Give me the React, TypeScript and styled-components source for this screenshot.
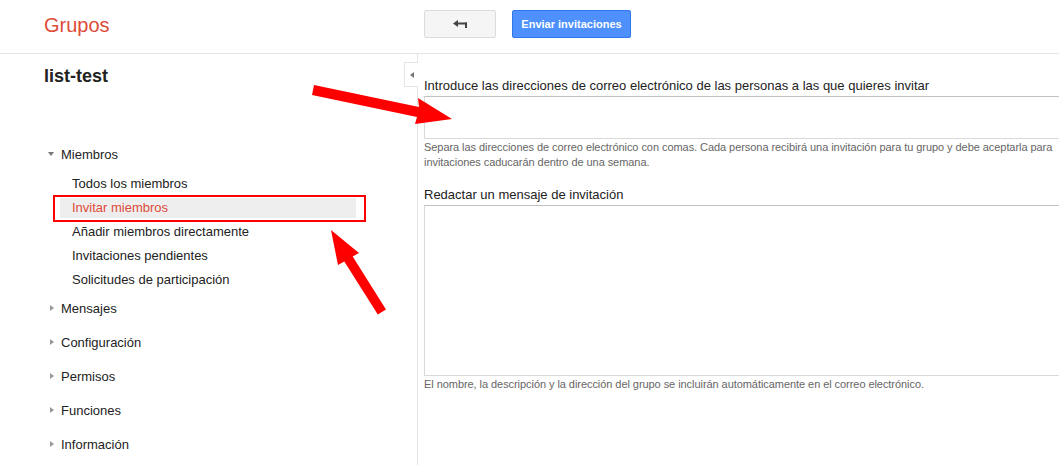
import React from "react"
import styled, { createGlobalStyle } from "styled-components"

const GlobalStyle = createGlobalStyle`
    html, body { margin: 0; padding: 0; background: #fff; }
    body {
        font-family: "Liberation Sans", Arial, sans-serif;
        color: #222;
        overflow: hidden;
    }
`

const Page = styled.div`
    position: relative;
    width: 1059px;
    height: 465px;
    overflow: hidden;
`

const Header = styled.div`
    display: flex;
    height: 53px;
    border-bottom: 1px solid #e5e5e5;
`
const Brand = styled.div`
    width: 417px;
    padding: 13px 0 0 44px;
    box-sizing: border-box;
    font-size: 20px;
    line-height: 24px;
    color: #dd4b39;
`
const Toolbar = styled.div`
    display: flex;
    gap: 16px;
    padding: 10px 0 0 7px;
`
const Button = styled.button<{ $primary?: boolean }>`
    display: flex;
    align-items: center;
    justify-content: center;
    height: 28px;
    width: ${p => (p.$primary ? "119px" : "72px")};
    padding: 0;
    border-radius: 2px;
    border: 1px solid ${p => (p.$primary ? "#3079ed" : "#dcdcdc")};
    background: ${p => (p.$primary ? "#4d90fe" : "#f5f5f5")};
    color: ${p => (p.$primary ? "#fff" : "#444")};
    font-family: "Liberation Sans", Arial, sans-serif;
    font-size: 11px;
    font-weight: bold;
`

const Body = styled.div`
    display: flex;
    height: 411px;
`
const Sidebar = styled.div`
    position: relative;
    width: 418px;
    flex-shrink: 0;
    box-sizing: border-box;
    border-right: 1px solid #e5e5e5;
`
const CollapseTab = styled.div`
    position: absolute;
    top: 8px;
    right: -1px;
    width: 14px;
    height: 25px;
    box-sizing: border-box;
    border: 1px solid #e5e5e5;
    border-right: none;
    background: #fff;
    display: flex;
    align-items: center;
    justify-content: center;
    &::before {
        content: "";
        border-top: 3px solid transparent;
        border-bottom: 3px solid transparent;
        border-right: 4px solid #777;
    }
`
const GroupTitle = styled.div`
    padding: 11px 0 0 44px;
    height: 72px;
    font-size: 18px;
    line-height: 22px;
    font-weight: bold;
    color: #222;
`
const Nav = styled.div`
    padding-left: 48px;
`
const SectionHead = styled.div`
    display: flex;
    align-items: center;
    height: 34px;
    font-size: 13px;
    color: #222;
`
const Caret = styled.span<{ $open?: boolean }>`
    display: flex;
    align-items: center;
    width: 13px;
    padding-left: ${p => (p.$open ? "0" : "2px")};
    box-sizing: border-box;
    &::before {
        content: "";
        ${p =>
            p.$open
                ? `border-left: 3.5px solid transparent;
                   border-right: 3.5px solid transparent;
                   border-top: 4px solid #777;`
                : `border-top: 3.5px solid transparent;
                   border-bottom: 3.5px solid transparent;
                   border-left: 4px solid #999;`}
    }
`
const SubList = styled.div`
    display: flex;
    flex-direction: column;
    gap: 4px;
    padding: 3px 0 1px;
`
const SubItem = styled.div<{ $active?: boolean }>`
    position: relative;
    margin-left: 12px;
    width: 296px;
    height: 20px;
    line-height: 20px;
    padding-left: 12px;
    box-sizing: border-box;
    font-size: 13px;
    color: ${p => (p.$active ? "#dd4b39" : "#222")};
    background: ${p => (p.$active ? "#eee" : "transparent")};
`
const Highlight = styled.div`
    position: absolute;
    left: -7px;
    top: -3px;
    width: 313px;
    height: 27px;
    box-sizing: border-box;
    border: 2px solid #f00;
`

const Main = styled.div`
    padding-left: 6px;
`
const Label = styled.div<{ $top: number }>`
    margin-top: ${p => p.$top}px;
    font-size: 13px;
    line-height: 16px;
    color: #222;
    white-space: nowrap;
`
const Field = styled.div<{ $h: number }>`
    margin-top: 2px;
    width: 700px;
    height: ${p => p.$h}px;
    box-sizing: border-box;
    border: 1px solid #d9d9d9;
    border-top-color: #c0c0c0;
`
const Hint = styled.div`
    margin-top: 1px;
    font-size: 11px;
    line-height: 15px;
    letter-spacing: -0.06px;
    color: #666;
    white-space: nowrap;
`

const Overlay = styled.svg`
    position: absolute;
    left: 0;
    top: 0;
    pointer-events: none;
`

const BackIcon = () => (
    <svg width="15" height="9" viewBox="0 0 15 9">
        <polygon points="0,3.5 5,0 5,7" fill="#444" />
        <rect x="4" y="2.5" width="10" height="2" fill="#444" />
        <rect x="12" y="2.5" width="2" height="5.5" fill="#444" />
    </svg>
)

const subItems = [
    "Todos los miembros",
    "Invitar miembros",
    "Añadir miembros directamente",
    "Invitaciones pendientes",
    "Solicitudes de participación",
]
const sections = ["Mensajes", "Configuración", "Permisos", "Funciones", "Información"]

export default function App() {
    return (
        <>
            <GlobalStyle />
            <Page>
                <Header>
                    <Brand>Grupos</Brand>
                    <Toolbar>
                        <Button><BackIcon /></Button>
                        <Button $primary>Enviar invitaciones</Button>
                    </Toolbar>
                </Header>
                <Body>
                    <Sidebar>
                        <CollapseTab />
                        <GroupTitle>list-test</GroupTitle>
                        <Nav>
                            <SectionHead><Caret $open />Miembros</SectionHead>
                            <SubList>
                                {subItems.map(item => (
                                    <SubItem key={item} $active={item === "Invitar miembros"}>
                                        {item}
                                        {item === "Invitar miembros" && <Highlight />}
                                    </SubItem>
                                ))}
                            </SubList>
                            {sections.map(s => (
                                <SectionHead key={s}><Caret />{s}</SectionHead>
                            ))}
                        </Nav>
                    </Sidebar>
                    <Main>
                        <Label $top={24}>
                            Introduce las direcciones de correo electrónico de las personas a las que quieres invitar
                        </Label>
                        <Field $h={43} />
                        <Hint>
                            Separa las direcciones de correo electrónico con comas. Cada persona recibirá una invitación para tu grupo y debe aceptarla para
                            <br />
                            invitaciones caducarán dentro de una semana.
                        </Hint>
                        <Label $top={17}>Redactar un mensaje de invitación</Label>
                        <Field $h={171} />
                        <Hint>
                            El nombre, la descripción y la dirección del grupo se incluirán automáticamente en el correo electrónico.
                        </Hint>
                    </Main>
                </Body>
                <Overlay width="1059" height="465" viewBox="0 0 1059 465">
                    <polygon
                        fill="#f00"
                        points="314,85 419,107 418,98 452,119 415,124 417,117 312,95"
                    />
                    <polygon
                        fill="#f00"
                        points="331,230 359,253 352.7,256.4 386,309.4 377.8,314.6 344.3,261.6 338,265"
                    />
                </Overlay>
            </Page>
        </>
    )
}
